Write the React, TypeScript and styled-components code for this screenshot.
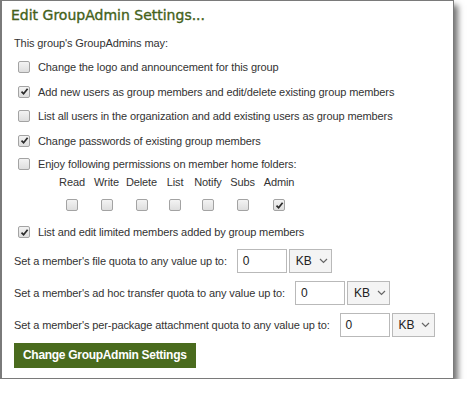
import styled, { createGlobalStyle } from 'styled-components';

const GlobalStyle = createGlobalStyle`
  body {
    margin: 0;
    background: #fff;
    font-family: "Liberation Sans", Arial, sans-serif;
  }
`;

const options = [
  { label: 'Change the logo and announcement for this group', checked: false },
  { label: 'Add new users as group members and edit/delete existing group members', checked: true },
  { label: 'List all users in the organization and add existing users as group members', checked: false },
  { label: 'Change passwords of existing group members', checked: true },
];

const perms = [
  { label: 'Read', checked: false },
  { label: 'Write', checked: false },
  { label: 'Delete', checked: false },
  { label: 'List', checked: false },
  { label: 'Notify', checked: false },
  { label: 'Subs', checked: false },
  { label: 'Admin', checked: true },
];

const quotas = [
  "Set a member's file quota to any value up to:",
  "Set a member's ad hoc transfer quota to any value up to:",
  "Set a member's per-package attachment quota to any value up to:",
];

const CheckBox = ({ checked }: { checked: boolean }) => (
  <Box>
    {checked && (
      <svg width="9" height="9" viewBox="0 0 9 9">
        <path d="M1.5 4.6 L3.6 6.8 L7.6 1.8" fill="none" stroke="#2b2b2b" strokeWidth="1.7" />
      </svg>
    )}
  </Box>
);

const Chevron = () => (
  <svg width="9" height="6" viewBox="0 0 9 6">
    <path d="M1 1 L4.5 4.5 L8 1" fill="none" stroke="#666" strokeWidth="1.2" />
  </svg>
);

const App = () => {
  return (
    <>
      <GlobalStyle />
      <Panel>
        <Title>Edit GroupAdmin Settings...</Title>
        <Body>
          <Intro>This group's GroupAdmins may:</Intro>
          {options.map((o) => (
            <OptionRow key={o.label}>
              <CheckBox checked={o.checked} />
              <span>{o.label}</span>
            </OptionRow>
          ))}
          <OptionRow $height={22}>
            <CheckBox checked={false} />
            <span>Enjoy following permissions on member home folders:</span>
          </OptionRow>
          <PermGrid>
            {perms.map((p) => (
              <PermLabel key={p.label}>{p.label}</PermLabel>
            ))}
            {perms.map((p) => (
              <PermCell key={p.label + '-box'}>
                <CheckBox checked={p.checked} />
              </PermCell>
            ))}
          </PermGrid>
          <OptionRow>
            <CheckBox checked />
            <span>List and edit limited members added by group members</span>
          </OptionRow>
          {quotas.map((q) => (
            <QuotaRow key={q}>
              <span>{q}</span>
              <QuotaInput>0</QuotaInput>
              <UnitSelect>
                KB <Chevron />
              </UnitSelect>
            </QuotaRow>
          ))}
          <SubmitButton>Change GroupAdmin Settings</SubmitButton>
        </Body>
      </Panel>
    </>
  );
};
export default App;

const Panel = styled.div`
  box-sizing: border-box;
  width: 454px;
  height: 379px;
  border: 1px solid #7a7a7a;
  border-left-width: 2px;
  background: #fff;
  box-shadow: 4px 5px 6px rgba(0, 0, 0, 0.55);
`;

const Title = styled.h2`
  margin: 0;
  padding: 2px 0 0 9px;
  height: 24px;
  line-height: 24px;
  font-family: "DejaVu Sans", Verdana, sans-serif;
  font-size: 14px;
  font-weight: normal;
  color: #44621a;
  -webkit-text-stroke: 0.35px #44621a;
`;

const Body = styled.div`
  padding-left: 12px;
  font-size: 11px;
  letter-spacing: -0.1px;
  color: #333;
`;

const Intro = styled.div`
  margin-top: 4px;
  height: 24px;
  line-height: 24px;
`;

const OptionRow = styled.div<{ $height?: number }>`
  display: flex;
  align-items: center;
  gap: 8px;
  height: ${(p) => p.$height ?? 24.5}px;
  padding-left: 4px;
`;

const Box = styled.span`
  box-sizing: border-box;
  width: 12px;
  height: 12px;
  flex: none;
  display: flex;
  align-items: center;
  justify-content: center;
  border: 1px solid #a3a3a3;
  border-radius: 2px;
  background: linear-gradient(#f3f3f3, #dedede);
`;

const PermGrid = styled.div`
  display: grid;
  grid-template-columns: 34px 35px 35px 32px 34px 35px 38px;
  grid-template-rows: 15px 30px;
  margin-left: 41px;
`;

const PermLabel = styled.div`
  text-align: center;
  line-height: 15px;
`;

const PermCell = styled.div`
  display: flex;
  align-items: center;
  justify-content: center;
`;

const QuotaRow = styled.div`
  display: flex;
  align-items: center;
  height: 32px;

  span {
    margin-right: 10px;
  }
`;

const QuotaInput = styled.div`
  box-sizing: border-box;
  width: 50px;
  height: 24px;
  padding-left: 5px;
  line-height: 22px;
  border: 1px solid #b9b9b9;
  background: #fff;
  color: #222;
  font-size: 12px;
`;

const UnitSelect = styled.div`
  box-sizing: border-box;
  display: flex;
  align-items: center;
  gap: 7px;
  width: 43px;
  height: 24px;
  margin-left: 2px;
  padding-left: 6px;
  border: 1px solid #b9b9b9;
  background: #f4f4f4;
  color: #222;
  font-size: 12px;
`;

const SubmitButton = styled.button`
  margin-top: 2px;
  height: 25px;
  padding: 0 9px;
  border: none;
  background: #4a6b1e;
  color: #fff;
  font-family: "Liberation Sans", Arial, sans-serif;
  font-size: 12px;
  font-weight: bold;
  letter-spacing: -0.3px;
`;
